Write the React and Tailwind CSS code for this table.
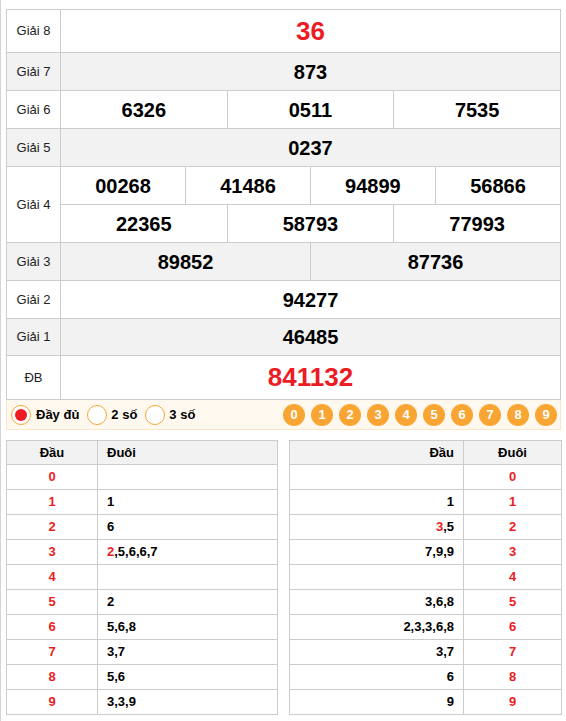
import React from "react";

const F = { fontFamily: '"Liberation Sans", Arial, sans-serif' };

function Num({ v, cls = "" }) {
  return <span className={cls}>{v}</span>;
}

const left = [
  ["0", []],
  ["1", [["1"]]],
  ["2", [["6"]]],
  ["3", [["2", true], [",5,6,6,7"]]],
  ["4", []],
  ["5", [["2"]]],
  ["6", [["5,6,8"]]],
  ["7", [["3,7"]]],
  ["8", [["5,6"]]],
  ["9", [["3,3,9"]]],
];
const right = [
  ["0", []],
  ["1", [["1"]]],
  ["2", [["3", true], [",5"]]],
  ["3", [["7,9,9"]]],
  ["4", []],
  ["5", [["3,6,8"]]],
  ["6", [["2,3,3,6,8"]]],
  ["7", [["3,7"]]],
  ["8", [["6"]]],
  ["9", [["9"]]],
];

function Parts({ parts }) {
  return parts.map((p, i) => (
    <span key={i} className={p[1] ? "text-[#ed1c24]" : "text-black"}>
      {p[0]}
    </span>
  ));
}

export default function App() {
  const td = "border border-[#cccccc] text-center align-middle p-0";
  const lab = "border border-[#cccccc] text-center align-middle p-0 text-[13px] text-[#222]";
  const n = "text-[20px] font-bold text-black";
  return (
    <div style={F} className="min-h-[721px] w-[566px] border-l border-[#d4d4d4] bg-white pt-[9px] pl-[5px] pr-[5px]">
      <table className="w-[555px] table-fixed border-collapse">
        <colgroup>
          <col className="w-[54px]" />
          {Array.from({ length: 12 }).map((_, i) => (
            <col key={i} />
          ))}
        </colgroup>
        <tbody>
          <tr className="h-[43px]">
            <td className={lab}>Giải 8</td>
            <td colSpan={12} className={td}>
              <span className="text-[26px] font-bold text-[#ed1c24]">36</span>
            </td>
          </tr>
          <tr className="h-[38px] bg-[#f2f2f2]">
            <td className={lab}>Giải 7</td>
            <td colSpan={12} className={td}><Num v="873" cls={n} /></td>
          </tr>
          <tr className="h-[38px]">
            <td className={lab}>Giải 6</td>
            <td colSpan={4} className={td}><Num v="6326" cls={n} /></td>
            <td colSpan={4} className={td}><Num v="0511" cls={n} /></td>
            <td colSpan={4} className={td}><Num v="7535" cls={n} /></td>
          </tr>
          <tr className="h-[38px] bg-[#f2f2f2]">
            <td className={lab}>Giải 5</td>
            <td colSpan={12} className={td}><Num v="0237" cls={n} /></td>
          </tr>
          <tr className="h-[38px]">
            <td rowSpan={2} className={lab}>Giải 4</td>
            <td colSpan={3} className={td}><Num v="00268" cls={n} /></td>
            <td colSpan={3} className={td}><Num v="41486" cls={n} /></td>
            <td colSpan={3} className={td}><Num v="94899" cls={n} /></td>
            <td colSpan={3} className={td}><Num v="56866" cls={n} /></td>
          </tr>
          <tr className="h-[38px]">
            <td colSpan={4} className={td}><Num v="22365" cls={n} /></td>
            <td colSpan={4} className={td}><Num v="58793" cls={n} /></td>
            <td colSpan={4} className={td}><Num v="77993" cls={n} /></td>
          </tr>
          <tr className="h-[38px] bg-[#f2f2f2]">
            <td className={lab}>Giải 3</td>
            <td colSpan={6} className={td}><Num v="89852" cls={n} /></td>
            <td colSpan={6} className={td}><Num v="87736" cls={n} /></td>
          </tr>
          <tr className="h-[38px]">
            <td className={lab}>Giải 2</td>
            <td colSpan={12} className={td}><Num v="94277" cls={n} /></td>
          </tr>
          <tr className="h-[37px] bg-[#f2f2f2]">
            <td className={lab}>Giải 1</td>
            <td colSpan={12} className={td}><Num v="46485" cls={n} /></td>
          </tr>
          <tr className="h-[44px]">
            <td className={lab}>ĐB</td>
            <td colSpan={12} className={td}>
              <span className="text-[26px] font-bold text-[#ed1c24]">841132</span>
            </td>
          </tr>
        </tbody>
      </table>

      <div className="flex h-[30px] w-[555px] items-center justify-between border-x border-b border-[#fbe7cc] bg-[#fff8ee] pl-[4px] pr-[3px]">
        <div className="flex items-center text-[13px] font-bold text-black">
          <span className="flex h-[20px] w-[20px] items-center justify-center rounded-full border border-[#f9a534] bg-white">
            <span className="h-[12px] w-[12px] rounded-full bg-[#ed1c24]" />
          </span>
          <span className="ml-[5px]">Đầy đủ</span>
          <span className="ml-[8px] h-[20px] w-[20px] rounded-full border border-[#f9a534] bg-white" />
          <span className="ml-[4px]">2 số</span>
          <span className="ml-[8px] h-[20px] w-[20px] rounded-full border border-[#f9a534] bg-white" />
          <span className="ml-[4px]">3 số</span>
        </div>
        <div className="flex items-center gap-[6px]">
          {["0", "1", "2", "3", "4", "5", "6", "7", "8", "9"].map((d) => (
            <span
              key={d}
              className="flex h-[22px] w-[22px] items-center justify-center rounded-full bg-[#f9a534] text-[13px] font-bold text-white"
            >
              {d}
            </span>
          ))}
        </div>
      </div>

      <div className="mt-[10px] flex w-[556px] justify-between">
        <table className="w-[272px] table-fixed border-collapse text-[13px] font-bold">
          <colgroup>
            <col className="w-[91px]" />
            <col />
          </colgroup>
          <thead>
            <tr className="h-[24px] bg-[#f2f2f2]">
              <th className="border border-[#cccccc] text-center">Đầu</th>
              <th className="border border-[#cccccc] pl-[9px] text-left">Đuôi</th>
            </tr>
          </thead>
          <tbody>
            {left.map(([h, parts]) => (
              <tr key={h} className="h-[25px]">
                <td className="border border-[#cccccc] text-center text-[#ed1c24]">{h}</td>
                <td className="border border-[#cccccc] pl-[9px] text-left"><Parts parts={parts} /></td>
              </tr>
            ))}
          </tbody>
        </table>
        <table className="w-[273px] table-fixed border-collapse text-[13px] font-bold">
          <colgroup>
            <col className="w-[174px]" />
            <col />
          </colgroup>
          <thead>
            <tr className="h-[24px] bg-[#f2f2f2]">
              <th className="border border-[#cccccc] pr-[9px] text-right">Đầu</th>
              <th className="border border-[#cccccc] text-center">Đuôi</th>
            </tr>
          </thead>
          <tbody>
            {right.map(([h, parts]) => (
              <tr key={h} className="h-[25px]">
                <td className="border border-[#cccccc] pr-[9px] text-right"><Parts parts={parts} /></td>
                <td className="border border-[#cccccc] text-center text-[#ed1c24]">{h}</td>
              </tr>
            ))}
          </tbody>
        </table>
      </div>
    </div>
  );
}
